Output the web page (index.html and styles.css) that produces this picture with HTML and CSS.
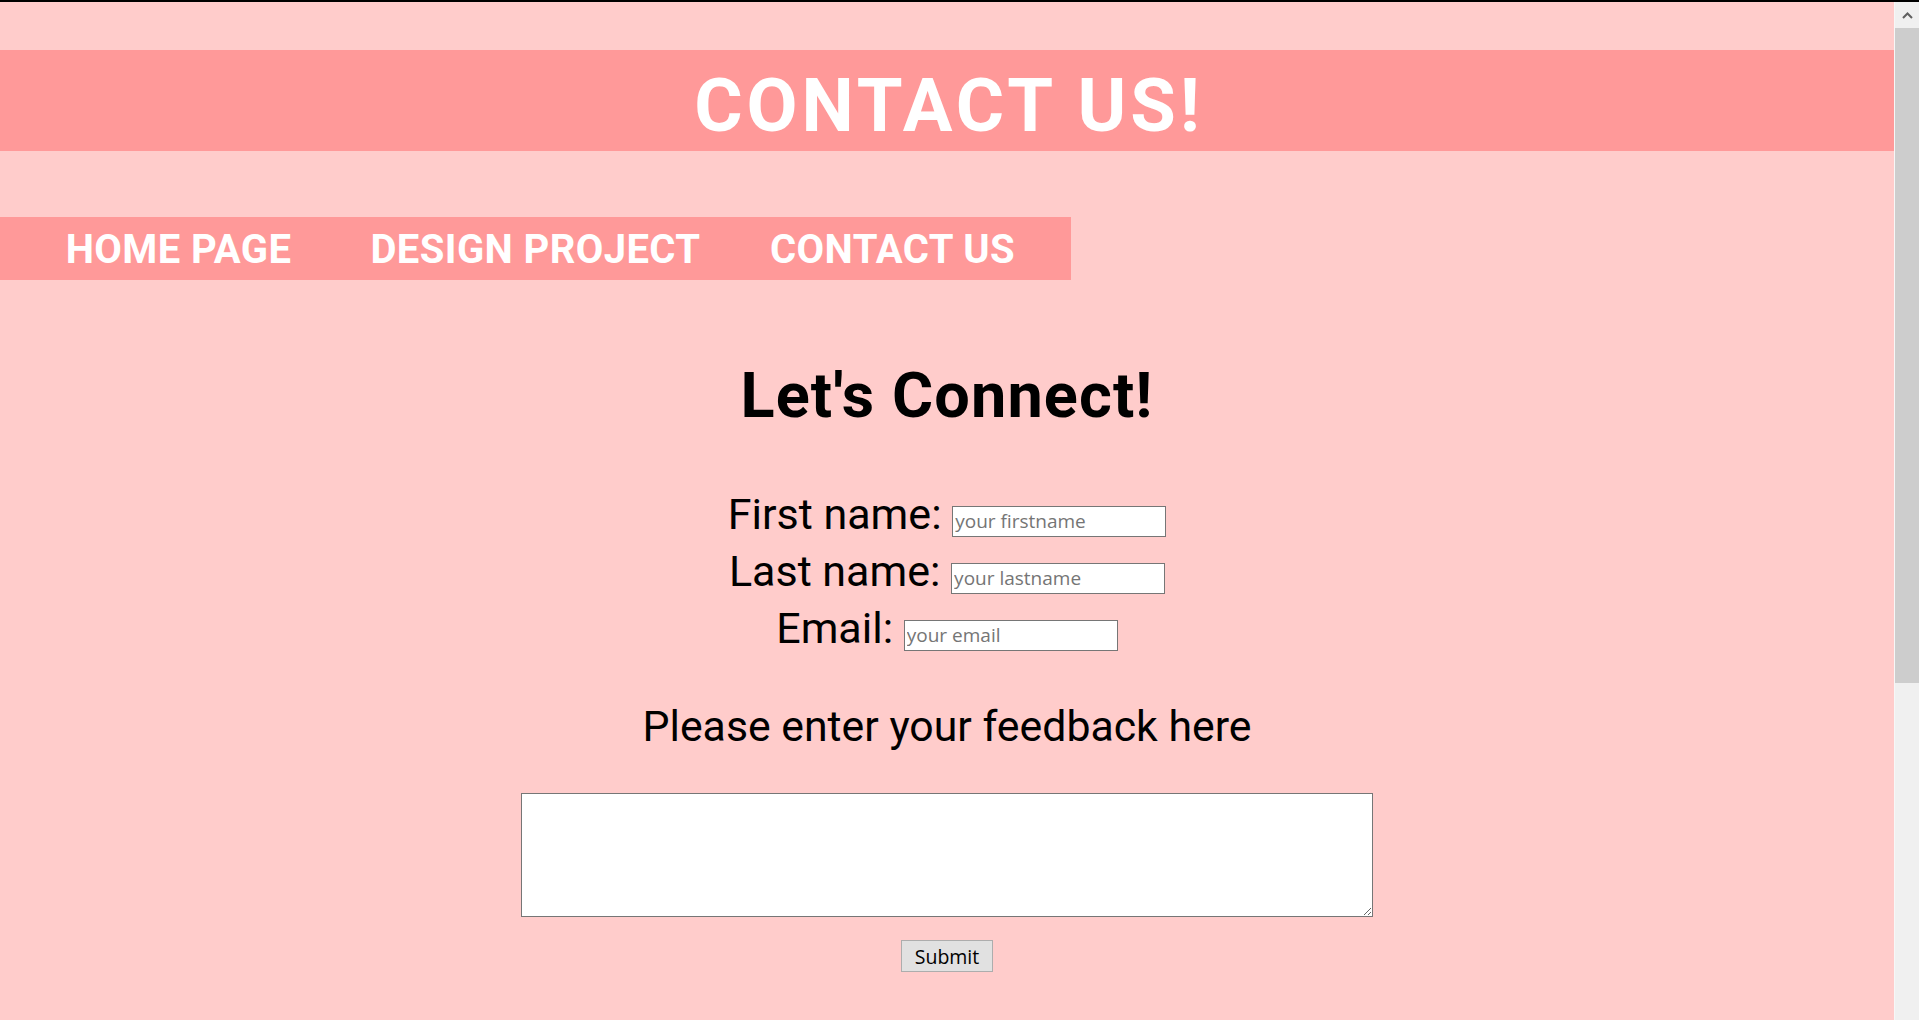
FILE: index.html
```html
<!DOCTYPE html>
<html lang="en">
<head>
<meta charset="utf-8">
<title>Contact Us</title>
<link rel="stylesheet" href="styles.css">
</head>
<body>
<div class="frame">
  <div class="page">
    <header class="banner">
      <h1 class="banner-title">CONTACT US!</h1>
    </header>
    <nav class="menu">
      <a class="menu-link" href="#">HOME PAGE</a>
      <a class="menu-link" href="#">DESIGN PROJECT</a>
      <a class="menu-link" href="#">CONTACT US</a>
    </nav>
    <h2 class="title">Let's Connect!</h2>
    <form class="contact">
      <div class="row row-first"><label for="fn">First name:</label> <input class="field" id="fn" type="text" placeholder="your firstname"></div>
      <div class="row"><label for="ln">Last name:</label> <input class="field" id="ln" type="text" placeholder="your lastname"></div>
      <div class="row"><label for="em">Email:</label> <input class="field" id="em" type="text" placeholder="your email"></div>
      <p class="prompt">Please enter your feedback here</p>
      <textarea class="feedback"></textarea>
      <div class="actions"><button class="submit" type="button">Submit</button></div>
    </form>
  </div>
  <div class="scrollbar">
    <div class="sb-btn">
      <svg width="11" height="7" viewBox="0 0 11 7"><polyline points="1,6 5.5,1.5 10,6" fill="none" stroke="#606060" stroke-width="2"/></svg>
    </div>
    <div class="sb-thumb"></div>
  </div>
</div>
</body>
</html>
```
FILE: styles.css
```css
html, body {
  margin: 0;
  height: 100%;
  overflow: hidden;
}
body {
  background: #ffcccb;
  font-family: "Comic Sans MS", Roboto, sans-serif;
  color: #000;
}
.frame {
  display: flex;
  height: 1020px;
  box-sizing: border-box;
  border-top: 2px solid #000;
}
.page {
  flex: 1;
  min-width: 0;
  background: #ffcccb;
}
.banner {
  margin-top: 48px;
  height: 101px;
  box-sizing: border-box;
  padding-top: 10px;
  background: #ff9999;
  text-align: center;
}
.banner-title {
  margin: 0;
  padding-left: 4px;
  font-size: 74px;
  line-height: 91px;
  font-weight: 700;
  color: #fff;
  letter-spacing: 4px;
}
.menu {
  margin-top: 66px;
  width: 1071px;
  height: 63px;
  box-sizing: border-box;
  padding-top: 3px;
  display: grid;
  grid-template-columns: repeat(3, 1fr);
  background: #ff9999;
}
.menu-link {
  color: #fff;
  text-decoration: none;
  text-align: center;
  font-size: 40px;
  font-weight: 700;
  line-height: 60px;
  letter-spacing: 0.4px;
}
.title {
  margin: 78px 0 0;
  font-size: 63px;
  line-height: 76px;
  font-weight: 700;
  text-align: center;
  letter-spacing: 1.1px;
}
.contact {
  margin: 0;
}
.row {
  text-align: center;
  font-size: 43px;
  line-height: 57px;
}
.row-first {
  margin-top: 52px;
}
.field {
  width: 214px;
  height: 31px;
  box-sizing: border-box;
  border: 1px solid #767676;
  border-radius: 0;
  background: #fff;
  font-family: "Open Sans", "Noto Sans", sans-serif;
  font-size: 19px;
  padding: 0 2px;
  vertical-align: 1px;
  outline: none;
}
.field::placeholder {
  color: #757575;
}
.prompt {
  margin: 41px 0 0;
  font-size: 42.8px;
  line-height: 57px;
  text-align: center;
}
.feedback {
  display: block;
  margin: 38px auto 0;
  width: 852px;
  height: 124px;
  box-sizing: border-box;
  border: 1px solid #767676;
  border-radius: 0;
  background: #fff;
  outline: none;
}
.actions {
  display: flex;
  justify-content: center;
  margin-top: 23px;
}
.submit {
  width: 92px;
  height: 32px;
  box-sizing: border-box;
  padding: 0;
  background: #e1e1e1;
  border: 1px solid #adadad;
  border-radius: 0;
  font-family: "Open Sans", "Noto Sans", sans-serif;
  font-size: 19.5px;
  color: #000;
}
.scrollbar {
  width: 24px;
  border-left: 1px solid #f7f7f7;
  background: #f0f0f0;
  display: flex;
  flex-direction: column;
}
.sb-btn {
  height: 26px;
  display: flex;
  align-items: center;
  justify-content: center;
}
.sb-thumb {
  height: 655px;
  background: #cdcdcd;
}
```
